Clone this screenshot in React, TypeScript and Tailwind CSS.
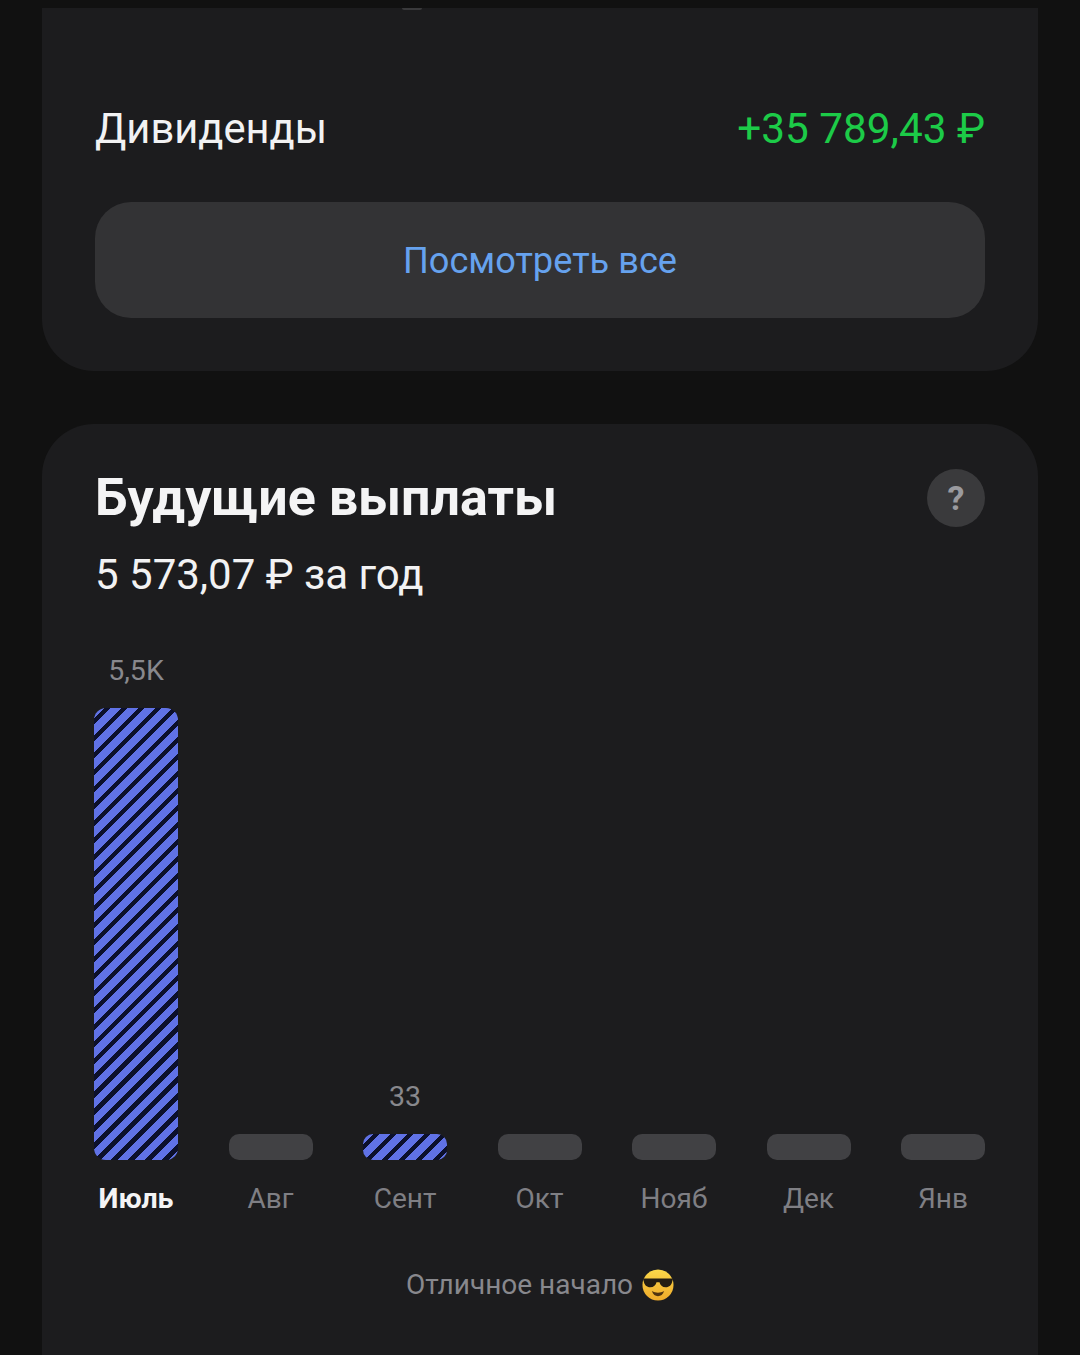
const months = [
  { label: "Июль", value: "5,5K", tall: true, active: true, striped: true },
  { label: "Авг" },
  { label: "Сент", value: "33", striped: true },
  { label: "Окт" },
  { label: "Нояб" },
  { label: "Дек" },
  { label: "Янв" },
]

function CoolEmoji() {
  return (
    <svg width="32" height="32" viewBox="0 0 34 34" className="ml-[9px] shrink-0">
      <defs>
        <linearGradient id="face" x1="0" y1="0" x2="0" y2="1">
          <stop offset="0" stopColor="#fbd84a" />
          <stop offset="1" stopColor="#eeaa2a" />
        </linearGradient>
      </defs>
      <circle cx="17" cy="17" r="16.500" fill="url(#face)" />
      <path d="M1 10h32l-.8 3c-.7 4-3.200 6.400-7 6.400-3.700 0-5.900-2.400-6.600-5.400h-3.200c-.7 3-2.900 5.400-6.600 5.400-3.800 0-6.300-2.400-7-6.400z" fill="#221c12" />
      <path d="M10.500 23.500c4 2.300 9 2.300 13 0-1.100 3.800-3.600 5.500-6.500 5.500s-5.400-1.700-6.500-5.500z" fill="#4f3310" />
    </svg>
  )
}

function Bar({ tall, striped }: { tall?: boolean; striped?: boolean }) {
  const size = tall ? "h-[452px] rounded-[12px]" : "h-[26px] rounded-[10px]"
  if (striped) {
    return (
      <div
        className={`w-[84px] ${size} bg-[repeating-linear-gradient(135deg,#6072e6_0px,#6072e6_7.500px,#0c102c_7.500px,#0c102c_12px)]`}
      />
    )
  }
  return <div className={`w-[84px] ${size} bg-[#414144]`} />
}

export default function App() {
  return (
    <div className="h-[1355px] overflow-hidden bg-[#111111] px-[42px] pt-[8px] font-['Roboto',sans-serif]">
      <section className="relative rounded-b-[52px] bg-[#1c1c1e] px-[53px] pt-[94px] pb-[53px]">
        <div className="absolute top-0 left-[360px] h-[2px] w-[20px] rounded-b-full bg-[#3a3a3c]" />
        <div className="flex items-center justify-between leading-[54px]">
          <span className="text-[41.700px] text-[#f2f2f3]">Дивиденды</span>
          <span className="text-[42.300px] text-[#1ccb48]">+35 789,43 ₽</span>
        </div>
        <button className="mt-[46px] flex h-[116px] w-full items-center justify-center rounded-[36px] bg-[#333335] pt-[2px] text-[36.200px] text-[#66a2ee]">
          Посмотреть все
        </button>
      </section>

      <section className="mt-[53px] h-[960px] rounded-t-[52px] bg-[#1c1c1e] px-[53px] pt-[44px]">
        <div className="flex items-start justify-between">
          <h2 className="text-[52px] leading-[60px] font-bold text-[#f4f4f5]">Будущие выплаты</h2>
          <div className="mt-[1px] flex h-[58px] w-[58px] items-center justify-center rounded-full bg-[#3a3a3c] text-[34px] font-bold text-[#9a9a9f]">
            ?
          </div>
        </div>
        <p className="mt-[21px] text-[42px] leading-[52px] text-[#f2f2f3]">5 573,07 ₽ за год</p>

        <div className="mt-[3px] -ml-[1px] flex h-[613px] justify-between">
          {months.map((m) => (
            <div key={m.label} className="flex w-[84px] flex-col items-center justify-end">
              {m.value && (
                <span className="mb-[19px] text-[28.500px] leading-[36px] text-[#88888d]">{m.value}</span>
              )}
              <Bar tall={m.tall} striped={m.striped} />
              <span
                className={`mt-[21px] whitespace-nowrap leading-[36px] ${
                  m.active ? "text-[28.500px] font-bold text-[#f4f4f5]" : "text-[28px] text-[#7f7f84]"
                }`}
              >
                {m.label}
              </span>
            </div>
          ))}
        </div>

        <div className="mt-[50px] flex items-center justify-center text-[28px] leading-[36px] text-[#88888d]">
          Отличное начало
          <CoolEmoji />
        </div>
      </section>
    </div>
  )
}
